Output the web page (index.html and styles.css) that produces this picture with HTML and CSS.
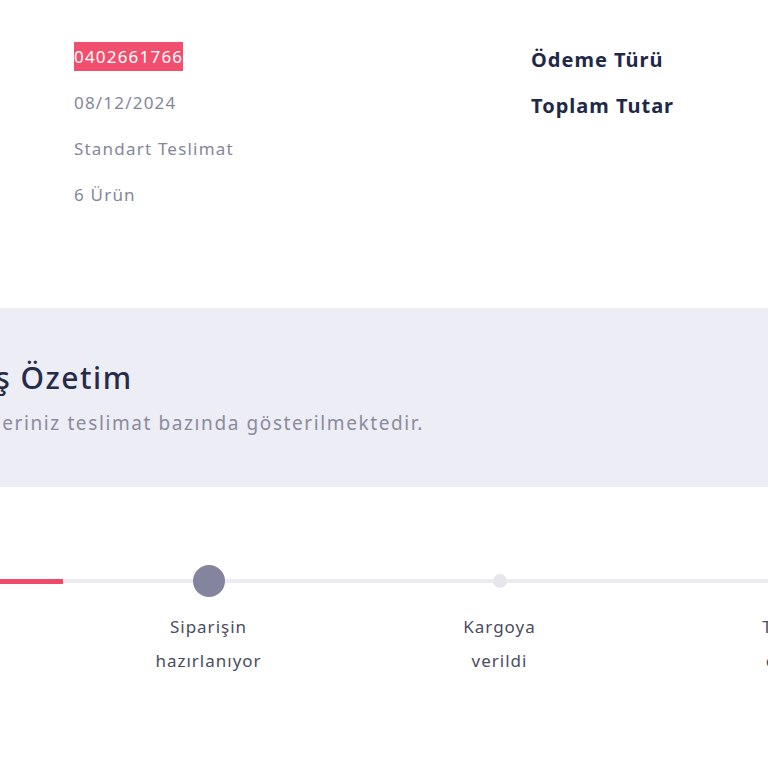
FILE: index.html
```html
<!DOCTYPE html>
<html lang="tr">
<head>
    <meta charset="UTF-8">
    <meta name="viewport" content="width=device-width, initial-scale=1.0">
    <title>Sipariş Özetim</title>
    <link rel="stylesheet" href="styles.css">
</head>
<body>
    <section class="order-info">
        <ul class="info-list">
            <li><span class="order-no">0402661766</span></li>
            <li>08/12/2024</li>
            <li>Standart Teslimat</li>
            <li>6 Ürün</li>
        </ul>
        <ul class="info-list info-strong">
            <li>Ödeme Türü</li>
            <li>Toplam Tutar</li>
        </ul>
    </section>

    <section class="summary">
        <div class="summary-text">
            <h2>Sipariş Özetim</h2>
            <p>Siparişleriniz teslimat bazında gösterilmektedir.</p>
        </div>
    </section>

    <ol class="stepper">
        <li class="step done">
            <div class="step-head"><span class="dot"></span></div>
            <div class="step-label">Sipariş<br>alındı</div>
        </li>
        <li class="step current">
            <div class="step-head"><span class="dot"></span></div>
            <div class="step-label">Siparişin<br>hazırlanıyor</div>
        </li>
        <li class="step">
            <div class="step-head"><span class="dot"></span></div>
            <div class="step-label">Kargoya<br>verildi</div>
        </li>
        <li class="step">
            <div class="step-head"><span class="dot"></span></div>
            <div class="step-label">Teslim<br>edildi</div>
        </li>
    </ol>
</body>
</html>
```

FILE: styles.css
```css
body {
    margin: 0;
    width: 768px;
    overflow: hidden;
    font-family: "Noto Sans", Arial, sans-serif;
    background: #ffffff;
    color: #2a2f4a;
}

ul, ol {
    list-style: none;
    margin: 0;
    padding: 0;
}

.order-info {
    display: grid;
    grid-template-columns: 457px auto;
    padding: 34px 0 0 74px;
}
.info-list li {
    font-size: 17px;
    line-height: 46px;
    letter-spacing: 1.2px;
    color: #858799;
    white-space: nowrap;
}
.order-no {
    background: #f24e6e;
    color: #ffffff;
    padding: 3px 0;
}
.info-strong {
    padding-top: 3px;
}
.info-strong li {
    font-size: 20px;
    font-weight: 700;
    letter-spacing: 1px;
    color: #1f2849;
}

.summary {
    margin-top: 90px;
    height: 179px;
    background: #ededf5;
    overflow: hidden;
}
.summary-text {
    margin-left: -75px;
    padding-top: 52px;
    white-space: nowrap;
}
.summary-text h2 {
    margin: 0 0 0 -20px;
    font-size: 30px;
    line-height: 36px;
    font-weight: 500;
    letter-spacing: 1.5px;
    color: #262b4a;
}
.summary-text p {
    margin: 12px 0 0;
    font-size: 19px;
    line-height: 30px;
    letter-spacing: 1.6px;
    color: #8a8b9d;
}

.stepper {
    display: flex;
    margin: 78px 0 0 -228px;
}
.step {
    flex: none;
    width: 291px;
    display: flex;
    flex-direction: column;
    align-items: center;
}
.step-head {
    width: 100%;
    height: 32px;
    display: flex;
    align-items: center;
    justify-content: center;
    background: linear-gradient(#ebebf1, #ebebf1) center / 100% 4px no-repeat;
}
.step.done .step-head {
    background: linear-gradient(#f04a6b, #f04a6b) center / 100% 5px no-repeat;
}
.dot {
    width: 14px;
    height: 14px;
    border-radius: 50%;
    background: #e6e6ed;
}
.step.done .dot {
    background: #f04a6b;
}
.step.current .dot {
    width: 32px;
    height: 32px;
    background: #84849f;
}
.step-label {
    margin-top: 13px;
    font-size: 17px;
    line-height: 34px;
    letter-spacing: 1px;
    color: #4b4c5e;
    text-align: center;
    white-space: nowrap;
}
```
